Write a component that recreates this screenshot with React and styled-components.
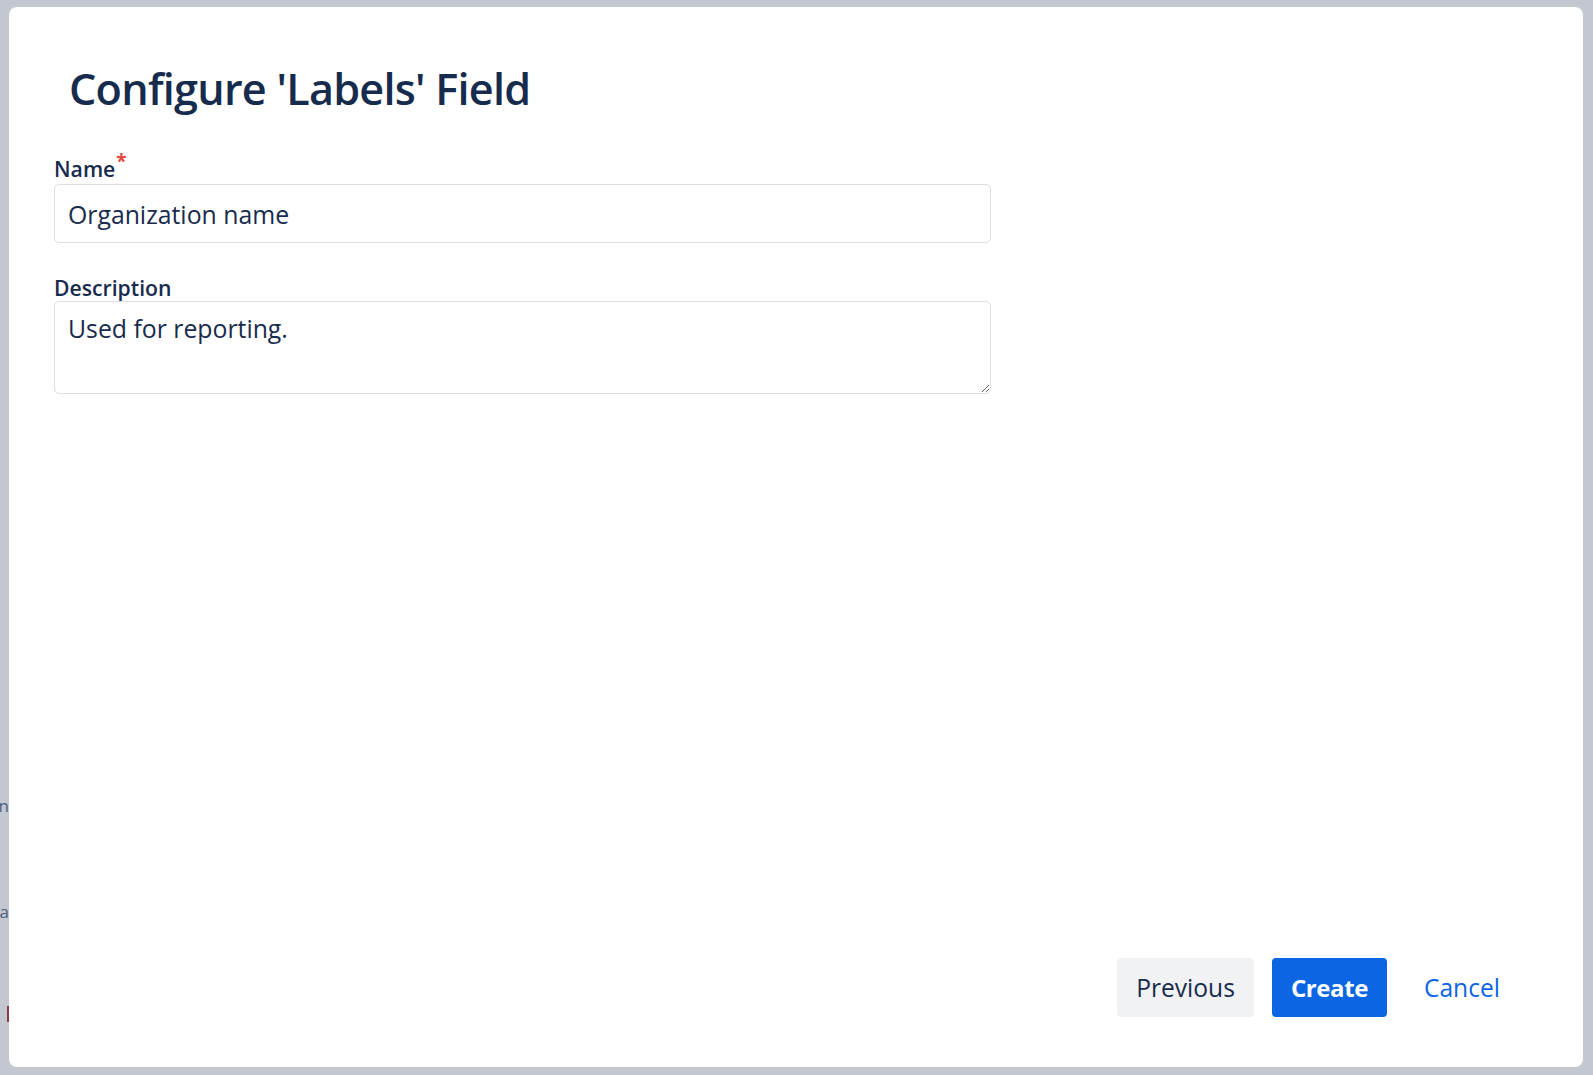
import React from 'react';
import styled, { createGlobalStyle } from 'styled-components';

const colors = {
    text: '#172b4d',
    border: '#dcdfe4',
    blanket: '#c2c7d0',
    brand: '#0c66e4',
    neutral: '#f1f2f4',
    danger: '#e0493e',
};

const GlobalStyle = createGlobalStyle`
    html, body {
        margin: 0;
        height: 100%;
        background: ${colors.blanket};
        font-family: "Segoe UI", "Open Sans", "Noto Sans", sans-serif;
        color: ${colors.text};
        overflow: hidden;
    }
    * {
        box-sizing: border-box;
    }
`

const BehindPage = styled.div`
    display: flex;
    flex-direction: column;
    align-items: flex-end;
    width: 9px;
    height: 100vh;
    overflow: hidden;
    padding-top: 796px;
    color: #4f5f7d;
    font-size: 17px;
    line-height: 20px;
    .fragment {
        white-space: nowrap;
    }
    .fragment + .fragment {
        margin-top: 86px;
    }
    .marker {
        width: 2px;
        height: 16px;
        margin: 84px 0 0;
        background: #8c3b43;
    }
`

const Blanket = styled.div`
    position: fixed;
    inset: 0;
    display: flex;
    padding: 7px 10px 8px 9px;
`

const Dialog = styled.section`
    flex: 1;
    display: flex;
    flex-direction: column;
    background: #fff;
    border-radius: 8px;
    padding: 56px 64px 50px 45px;
`

const Title = styled.h1`
    margin: 0 0 41px;
    padding-left: 15px;
    font-size: 43.2px;
    line-height: 52px;
    font-weight: 600;
    letter-spacing: -0.75px;
    color: ${colors.text};
`

const Form = styled.div`
    width: 937px;
    display: flex;
    flex-direction: column;
    gap: 32px;
`

const Field = styled.div`
    display: flex;
    flex-direction: column;
    gap: 1px;
`

const Label = styled.label`
    font-size: 21.2px;
    line-height: 25px;
    font-weight: 600;
    color: ${colors.text};
    .required {
        position: relative;
        top: -9px;
        margin-left: 1px;
        font-size: 19px;
        font-weight: 700;
        color: ${colors.danger};
    }
`

const TextInput = styled.input`
    height: 59px;
    border: 1px solid ${colors.border};
    border-radius: 5px;
    padding: 0 13px;
    font: 400 24.8px/33px "Segoe UI", "Open Sans", sans-serif;
    color: ${colors.text};
    background: #fff;
    outline: none;
`

const TextArea = styled.textarea`
    height: 93px;
    border: 1px solid ${colors.border};
    border-radius: 5px;
    padding: 10px 13px;
    font: 400 24.8px/33px "Segoe UI", "Open Sans", sans-serif;
    color: ${colors.text};
    background: #fff;
    outline: none;
    resize: vertical;
`

const Spacer = styled.div`
    flex: 1;
`

const Footer = styled.footer`
    display: flex;
    justify-content: flex-end;
    gap: 18px;
`

const Button = styled.button`
    height: 59px;
    padding: 0 19px;
    border: none;
    border-radius: 4px;
    font-family: "Segoe UI", "Open Sans", sans-serif;
    font-size: ${({ $variant }) => ($variant === 'primary' ? '24px' : '24.6px')};
    font-weight: ${({ $variant }) => ($variant === 'primary' ? 700 : 400)};
    letter-spacing: ${({ $variant }) => ($variant === 'primary' ? '-0.4px' : '0')};
    color: ${({ $variant }) =>
        $variant === 'primary' ? '#fff' : $variant === 'subtle' ? colors.brand : colors.text};
    background: ${({ $variant }) =>
        $variant === 'primary' ? colors.brand : $variant === 'subtle' ? 'transparent' : colors.neutral};
    cursor: pointer;
`

function App() {
    return (
        <>
            <GlobalStyle />
            <BehindPage>
                <span className='fragment'>Description</span>
                <span className='fragment'>Integra</span>
                <span className='marker' />
            </BehindPage>
            <Blanket>
                <Dialog role='dialog'>
                    <Title>Configure 'Labels' Field</Title>
                    <Form>
                        <Field>
                            <Label htmlFor='field-name'>
                                Name<span className='required'>*</span>
                            </Label>
                            <TextInput id='field-name' defaultValue='Organization name' />
                        </Field>
                        <Field>
                            <Label htmlFor='field-description'>Description</Label>
                            <TextArea id='field-description' defaultValue='Used for reporting.' />
                        </Field>
                    </Form>
                    <Spacer />
                    <Footer>
                        <Button>Previous</Button>
                        <Button $variant='primary'>Create</Button>
                        <Button $variant='subtle'>Cancel</Button>
                    </Footer>
                </Dialog>
            </Blanket>
        </>
    )
}

export default App
